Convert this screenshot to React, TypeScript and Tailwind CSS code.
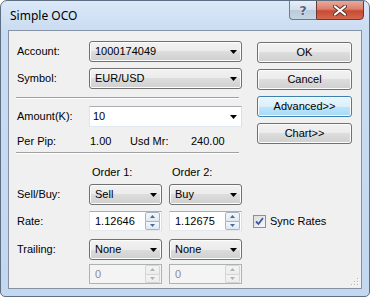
import React from "react";

const FONT = { fontFamily: '"Liberation Sans", Arial, sans-serif' };

function Arrow({ color = "#000" }: { color?: string }) {
  return (
    <svg width="7" height="4" viewBox="0 0 7 4" className="block">
      <path d="M0 0H7L3.5 4Z" fill={color} />
    </svg>
  );
}

function Combo({ text, w }: { text: string; w: string }) {
  return (
    <div
      className={`${w} h-[21px] flex items-center justify-between rounded-[3px] border border-[#707070] bg-[linear-gradient(#f2f2f2_0%,#ebebeb_50%,#dddddd_50%,#cfcfcf_100%)] pl-[5px] pr-[4px] text-[11px] text-black shadow-[inset_0_0_0_1px_#fcfcfc]`}
    >
      <span>{text}</span>
      <Arrow />
    </div>
  );
}

function EditCombo({ text }: { text: string }) {
  return (
    <div className="w-[153px] h-[21px] flex items-center justify-between border border-[#abadb3] border-l-[#e2e3ea] border-r-[#dbdfe6] border-b-[#e3e9ef] bg-white pl-[3px] pr-[4px] text-[11px] text-black">
      <span>{text}</span>
      <Arrow />
    </div>
  );
}

function SpinArrow({ up, color }: { up: boolean; color: string }) {
  return (
    <svg width="5" height="3" viewBox="0 0 5 3" className="block">
      <path d={up ? "M0 3H5L2.5 0Z" : "M0 0H5L2.5 3Z"} fill={color} />
    </svg>
  );
}

function Spin({ text, disabled }: { text: string; disabled?: boolean }) {
  const border = disabled ? "border-[#adb2b5]" : "border-[#abadb3] border-l-[#e2e3ea] border-r-[#dbdfe6] border-b-[#e3e9ef]";
  const btn = disabled
    ? "border-[#d5d5d5] bg-[linear-gradient(#f4f4f4,#ececec)]"
    : "border-[#a8b3c2] bg-[linear-gradient(#f3f7fb,#dfe8f2)]";
  const ac = disabled ? "#b2b2b2" : "#4e6a95";
  return (
    <div
      className={`w-[73px] h-[20px] flex items-center justify-between border ${border} ${disabled ? "bg-[#f4f4f4] text-[#8a8a8a]" : "bg-white text-black"} pl-[5px] pr-[1px] text-[11px]`}
    >
      <span>{text}</span>
      <div className="flex flex-col h-[18px] w-[15px]">
        <div className={`flex-1 flex items-center justify-center border rounded-t-[2px] ${btn}`}>
          <SpinArrow up color={ac} />
        </div>
        <div className={`flex-1 flex items-center justify-center border border-t-0 rounded-b-[2px] ${btn}`}>
          <SpinArrow up={false} color={ac} />
        </div>
      </div>
    </div>
  );
}

function Btn({ text, focus }: { text: string; focus?: boolean }) {
  const cls = focus
    ? "border-[#3c7fb1] bg-[linear-gradient(#eaf6fd_0%,#d9f0fc_50%,#bee6fd_50%,#a7d9f5_100%)]"
    : "border-[#707070] bg-[linear-gradient(#f2f2f2_0%,#ebebeb_50%,#dddddd_50%,#cfcfcf_100%)]";
  return (
    <div
      className={`w-[95px] h-[21px] flex items-center justify-center rounded-[3px] border ${cls} text-[11px] text-black shadow-[inset_0_0_0_1px_#fcfcfc]`}
    >
      {text}
    </div>
  );
}

function Label({ children }: { children: React.ReactNode }) {
  return <div className="w-[72px] text-[11px] text-black">{children}</div>;
}

export default function App() {
  return (
    <div className="w-[370px] h-[297px] bg-white" style={FONT}>
      <div className="w-[370px] h-[297px] flex flex-col rounded-t-[7px] rounded-b-[5px] border border-[#5f6f83] bg-[linear-gradient(#dbe8f7_0%,#cadcf2_30px,#c3d7f0_100%)] overflow-hidden">
        {/* Title bar */}
        <div className="h-[29px] flex items-start justify-between relative">
          <div
            className="pl-[9px] pt-[6px] text-[12px] text-black"
            style={{ fontFamily: '"Noto Sans", "Open Sans", sans-serif' }}
          >
            Simple OCO
          </div>
          <div className="flex mr-[5px] -mt-px">
            <div className="w-[27px] h-[20px] flex items-center justify-center rounded-bl-[4px] border border-[#6d7c8f] border-r-0 bg-[linear-gradient(#e6eef8_0%,#d3deec_50%,#bccbdc_50%,#c6d5e6_100%)]">
              <span
                className="text-[13px] font-bold text-[#5a6473] leading-none"
                style={{ fontFamily: '"DejaVu Sans", sans-serif', textShadow: "0 0 1px #fff, 0 0 1px #fff" }}
              >
                ?
              </span>
            </div>
            <div className="w-[48px] h-[20px] flex items-center justify-center rounded-br-[4px] border border-[#6d3a33] bg-[linear-gradient(#e9a99a_0%,#dc7f6c_45%,#c84a32_55%,#d5664e_100%)]">
              <svg width="14" height="11" viewBox="0 0 14 11">
                <path d="M2 1.5L12 9.5M12 1.5L2 9.5" stroke="#5a3530" strokeWidth="4" strokeLinecap="round" />
                <path d="M2 1.5L12 9.5M12 1.5L2 9.5" stroke="#ffffff" strokeWidth="2.2" strokeLinecap="round" />
              </svg>
            </div>
          </div>
        </div>

        {/* Client area */}
        <div className="mx-[7px] mb-[7px] flex-1 border border-[#8592a4] bg-[#f0f0f0] relative flex flex-col">
          {/* Top section */}
          <div className="flex">
            <div className="flex flex-col pl-[8px] w-[233px]">
              <div className="mt-[10px] flex items-center">
                <Label>Account:</Label>
                <Combo text="1000174049" w="w-[153px]" />
              </div>
              <div className="mt-[6px] flex items-center">
                <Label>Symbol:</Label>
                <Combo text="EUR/USD" w="w-[153px]" />
              </div>
              <div className="mt-[8px] h-[2px] w-[223px] -ml-px border-t border-[#a0a0a0] border-b border-b-white" />
              <div className="mt-[7px] flex items-center">
                <Label>Amount(K):</Label>
                <EditCombo text="10" />
              </div>
              <div className="mt-[7px] h-[14px] flex items-center text-[11px] text-black">
                <div className="w-[73px]">Per Pip:</div>
                <div className="w-[40px]">1.00</div>
                <div className="w-[61px]">Usd Mr:</div>
                <div>240.00</div>
              </div>
              <div className="mt-[4px] h-[2px] w-[223px] -ml-px border-t border-[#a0a0a0] border-b border-b-white" />
            </div>
            <div className="ml-[15px] mt-[11px] flex flex-col gap-[6px]">
              <Btn text="OK" />
              <Btn text="Cancel" />
              <Btn text="Advanced>>" focus />
              <Btn text="Chart>>" />
            </div>
          </div>

          {/* Lower section */}
          <div className="flex flex-col pl-[8px]">
            <div className="mt-[11px] h-[14px] flex items-center text-[11px] text-black">
              <div className="w-[75px]" />
              <div className="w-[80px]">Order 1:</div>
              <div>Order 2:</div>
            </div>
            <div className="mt-[5px] flex items-center">
              <Label>Sell/Buy:</Label>
              <Combo text="Sell" w="w-[73px]" />
              <div className="w-[7px]" />
              <Combo text="Buy" w="w-[73px]" />
            </div>
            <div className="mt-[6px] flex items-center">
              <Label>Rate:</Label>
              <Spin text="1.12646" />
              <div className="w-[7px]" />
              <Spin text="1.12675" />
              <div className="ml-[11px] flex items-center gap-[4px]">
                <div className="w-[13px] h-[13px] border border-[#8e8f8f] bg-[linear-gradient(135deg,#dcdcdc,#f8f8f8)] flex items-center justify-center">
                  <svg width="9" height="9" viewBox="0 0 9 9">
                    <path d="M1 4.5L3.5 7L8 1" stroke="#3b5a9a" strokeWidth="1.8" fill="none" />
                  </svg>
                </div>
                <span className="text-[11px] text-black">Sync Rates</span>
              </div>
            </div>
            <div className="mt-[8px] flex items-center">
              <Label>Trailing:</Label>
              <Combo text="None" w="w-[73px]" />
              <div className="w-[7px]" />
              <Combo text="None" w="w-[73px]" />
            </div>
            <div className="mt-[4px] flex items-center">
              <Label>{""}</Label>
              <Spin text="0" disabled />
              <div className="w-[7px]" />
              <Spin text="0" disabled />
            </div>
          </div>

          {/* size grip */}
          <div className="absolute right-[2px] bottom-[2px] w-[10px] h-[10px]">
            <svg width="10" height="10" viewBox="0 0 10 10">
              {[
                [8, 2],
                [5, 5],
                [8, 5],
                [2, 8],
                [5, 8],
                [8, 8],
              ].map(([x, y], i) => (
                <g key={i}>
                  <rect x={x} y={y} width="1" height="1" fill="#b8b8b8" />
                  <rect x={x + 1} y={y + 1} width="1" height="1" fill="#ffffff" />
                </g>
              ))}
            </svg>
          </div>
        </div>
      </div>
    </div>
  );
}
